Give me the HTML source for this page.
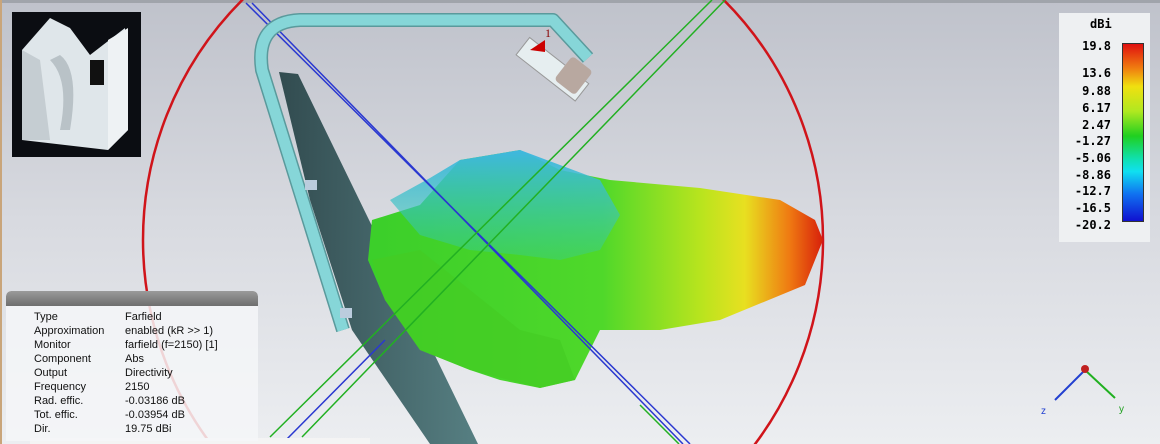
<!DOCTYPE html>
<html style="overflow:hidden"><head><style>
html,body{margin:0;width:1160px;height:444px;overflow:hidden;font-family:"Liberation Sans",sans-serif;}
#wrap{position:relative;width:1160px;height:444px;overflow:hidden;}
#v{position:absolute;left:0;top:0;width:1160px;height:444px;background:linear-gradient(#bfc2cb,#d8dae0 50%,#eceef1);}
.info{position:absolute;left:6px;top:291px;width:252px;height:150px;background:rgba(245,246,248,0.85);border-radius:5px 5px 0 0;overflow:hidden;}
.info .h{height:15px;background:linear-gradient(#9a9a9a,#6e6e6e);border-radius:5px 5px 0 0;}
.info table{position:absolute;left:28px;top:19px;border-collapse:collapse;font-size:11px;color:#111;}
.info td{padding:0;height:14px;line-height:14px;}
.info td:first-child{width:91px;}
.leg{position:absolute;left:1059px;top:13px;width:91px;height:229px;background:#eef0f2;font-family:"DejaVu Sans Mono","Liberation Mono",monospace;font-weight:bold;font-size:12px;color:#000;}
.leg span{position:absolute;right:39px;line-height:14px;}
</style></head><body><div id="wrap">
<div id="v"></div>
<svg width="1160" height="444" viewBox="0 0 1160 444" style="position:absolute;left:0;top:0;overflow:hidden">
<defs>
<linearGradient id="beam" x1="380" y1="0" x2="825" y2="0" gradientUnits="userSpaceOnUse">
<stop offset="0" stop-color="#3ccf2a"/><stop offset="0.5" stop-color="#4fd82a"/><stop offset="0.72" stop-color="#b8e41e"/><stop offset="0.82" stop-color="#e8e020"/><stop offset="0.92" stop-color="#ef7a12"/><stop offset="1" stop-color="#d61a0a"/></linearGradient>
<linearGradient id="cy" x1="0" y1="150" x2="0" y2="280" gradientUnits="userSpaceOnUse"><stop offset="0" stop-color="#3fb7e0"/><stop offset="1" stop-color="#2fd0a0" stop-opacity="0.2"/></linearGradient>
<linearGradient id="pan" x1="280" y1="0" x2="480" y2="0" gradientUnits="userSpaceOnUse"><stop offset="0" stop-color="#2a4549"/><stop offset="1" stop-color="#4f7a7d"/></linearGradient>
</defs>
<rect x="0" y="0" width="1160" height="3" fill="#a0a4ab"/>
<rect x="0" y="0" width="2" height="444" fill="#c9a57a"/>
<circle cx="483" cy="240" r="340" fill="none" stroke="#d0141a" stroke-width="2.5"/>
<polygon points="279,72 298,74 478,444 430,444 352,330 310,200" fill="url(#pan)" opacity="0.95"/>
<path d="M372,220 L420,205 L460,160 L520,150 L560,170 L610,180 L700,188 L780,200 L815,220 L823,240 L805,285 L720,320 L660,330 L600,330 L575,380 L540,388 L500,380 L470,370 L420,350 L385,300 L368,260 Z" fill="url(#beam)"/>
<path d="M390,200 L430,178 L460,160 L520,150 L560,165 L600,180 L620,215 L600,250 L560,260 L520,255 L470,250 L420,235 Z" fill="url(#cy)"/>
<path d="M372,260 L420,250 L470,290 L520,330 L560,340 L575,380 L540,388 L470,370 L420,350 L385,300 Z" fill="#45cc24" opacity="0.7"/>
<line x1="246" y1="3" x2="690" y2="444" stroke="#2a38d0" stroke-width="1.5"/>
<line x1="252" y1="3" x2="683" y2="444" stroke="#2a38d0" stroke-width="1.5"/>
<line x1="282" y1="444" x2="385" y2="340" stroke="#2a38d0" stroke-width="1.5"/>
<line x1="270" y1="437" x2="712" y2="0" stroke="#22b022" stroke-width="1.5"/>
<line x1="302" y1="437" x2="725" y2="0" stroke="#22b022" stroke-width="1.5"/>
<line x1="640" y1="405" x2="679" y2="444" stroke="#22b022" stroke-width="1.5"/>
<path d="M343,330 L262,70 Q255,22 300,20 L553,20 L588,58" fill="none" stroke="#5a9a9c" stroke-width="14" stroke-linejoin="round"/>
<path d="M343,330 L262,70 Q255,22 300,20 L553,20 L588,58" fill="none" stroke="#86d6d8" stroke-width="11" stroke-linejoin="round"/>
<rect x="305" y="180" width="12" height="10" fill="#bcd" /><rect x="340" y="308" width="12" height="10" fill="#bcd"/>
<g transform="rotate(38 555 70)"><rect x="515" y="60" width="75" height="22" fill="#e6eef0" stroke="#999"/><rect x="560" y="48" width="26" height="30" rx="4" fill="#b8a8a0"/></g>
<polygon points="530,50 545,40 545,52" fill="#c00"/>
<text x="545" y="37" font-size="12" fill="#800" font-family="Liberation Serif">1</text>
<rect x="12" y="12" width="129" height="145" fill="#0b0d12"/>
<path d="M22,50 L50,18 L70,28 L90,55 L125,28 L128,130 L108,150 L22,140 Z" fill="#dfe6ea"/>
<path d="M22,50 L40,60 L50,140 L22,140 Z" fill="#c5cdd2"/>
<path d="M108,40 L128,28 L128,130 L108,150 Z" fill="#eef2f4"/>
<path d="M60,55 Q80,70 70,130 L60,130 Q70,80 50,60 Z" fill="#b9c2c7"/>
<rect x="90" y="60" width="14" height="25" fill="#111"/>
<rect x="30" y="438" width="340" height="6" fill="#f4f4f4"/>
<g transform="translate(1085,370)" stroke-width="2">
<line x1="0" y1="0" x2="-30" y2="30" stroke="#2240d0"/><line x1="0" y1="0" x2="30" y2="28" stroke="#20b020"/>
<circle cx="0" cy="-1" r="4" fill="#c02020"/>
<text x="-44" y="44" font-size="10" fill="#2240d0" stroke="none">z</text><text x="34" y="42" font-size="10" fill="#20a020" stroke="none">y</text>
</g>
</svg>
<div class="info"><div class="h"></div>
<table>
<tr><td>Type</td><td>Farfield</td></tr>
<tr><td>Approximation</td><td>enabled (kR &gt;&gt; 1)</td></tr>
<tr><td>Monitor</td><td>farfield (f=2150) [1]</td></tr>
<tr><td>Component</td><td>Abs</td></tr>
<tr><td>Output</td><td>Directivity</td></tr>
<tr><td>Frequency</td><td>2150</td></tr>
<tr><td>Rad. effic.</td><td>-0.03186 dB</td></tr>
<tr><td>Tot. effic.</td><td>-0.03954 dB</td></tr>
<tr><td>Dir.</td><td>19.75 dBi</td></tr>
</table></div>
<div class="leg">
<div style="position:absolute;left:31px;top:4px">dBi</div>
<div style="position:absolute;left:63px;top:30px;width:20px;height:177px;border:1px solid #333;background:linear-gradient(#e01010,#f08010 14%,#f0e010 24%,#b0e820 38%,#20d020 52%,#10e0b0 65%,#10e0f0 72%,#1070f0 85%,#1010d0)"></div>
<span style="top:26px">19.8</span><span style="top:53px">13.6</span><span style="top:71px">9.88</span><span style="top:88px">6.17</span><span style="top:105px">2.47</span><span style="top:121px">-1.27</span><span style="top:138px">-5.06</span><span style="top:155px">-8.86</span><span style="top:171px">-12.7</span><span style="top:188px">-16.5</span><span style="top:205px">-20.2</span>
</div>
</div></body></html>
